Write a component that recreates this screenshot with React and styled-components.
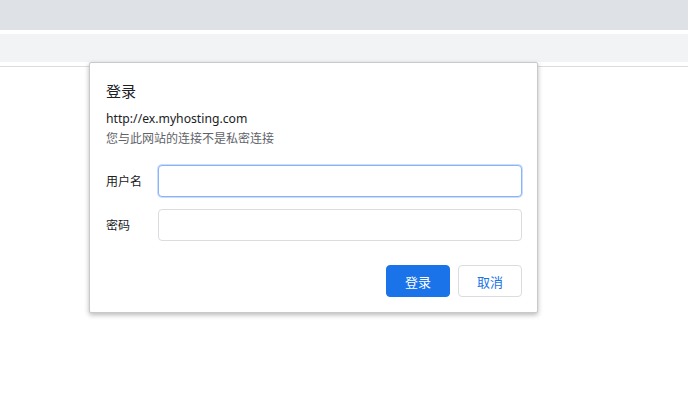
import styled, { createGlobalStyle } from "styled-components"

const GlobalStyle = createGlobalStyle`
  body {
    margin: 0;
    background: #ffffff;
    font-family: "Segoe UI", "Noto Sans", "Noto Sans CJK SC", sans-serif;
  }
`

const blue = "#1a73e8"
const line = "#dadce0"

const Page = () => {
  return (
    <Screen>
      <GlobalStyle />
      <TabStrip />
      <Toolbar />
      <Divider />
      <Dialog>
        <Title>登录</Title>
        <Origin>http://ex.myhosting.com</Origin>
        <Note>您与此网站的连接不是私密连接</Note>
        <Form>
          <Row>
            <Label>用户名</Label>
            <Input type="text" $focused />
          </Row>
          <Row>
            <Label>密码</Label>
            <Input type="password" />
          </Row>
        </Form>
        <Actions>
          <Button $primary>登录</Button>
          <Button>取消</Button>
        </Actions>
      </Dialog>
    </Screen>
  )
}

export default Page

const Screen = styled.div`
  position: relative;
  width: 688px;
  height: 406px;
  background: #ffffff;
  overflow: hidden;
`

const TabStrip = styled.div`
  height: 30px;
  background: #dee1e6;
`

const Toolbar = styled.div`
  height: 28px;
  margin-top: 4px;
  background: #f1f3f4;
`

const Divider = styled.div`
  height: 1px;
  margin-top: 4px;
  background: ${line};
`

const Dialog = styled.div`
  position: absolute;
  top: 62px;
  left: 89px;
  width: 416px;
  padding: 18px 15px 15px 16px;
  background: #ffffff;
  border: 1px solid #c8c9cc;
  border-radius: 2px;
  box-shadow: 0 2px 5px rgba(0, 0, 0, 0.28);
  display: flex;
  flex-direction: column;
`

const Title = styled.div`
  font-size: 15px;
  line-height: 20px;
  color: #202124;
`

const Origin = styled.div`
  margin-top: 9px;
  font-size: 12.2px;
  line-height: 18px;
  color: #202124;
`

const Note = styled.div`
  margin-top: 3px;
  font-size: 12px;
  line-height: 16px;
  color: #5f6368;
`

const Form = styled.div`
  margin-top: 18px;
  display: flex;
  flex-direction: column;
  gap: 12px;
`

const Row = styled.div`
  display: flex;
  align-items: center;
`

const Label = styled.label`
  width: 52px;
  flex: none;
  font-size: 12px;
  color: #202124;
`

const Input = styled.input`
  box-sizing: border-box;
  flex: 1;
  height: 32px;
  margin: 0;
  padding: 0 8px;
  border: 1px solid ${(p) => (p.$focused ? "#8ab4f8" : line)};
  box-shadow: ${(p) => (p.$focused ? "0 0 0 1px rgba(138, 180, 248, 0.45)" : "none")};
  border-radius: 4px;
  outline: none;
  background: #ffffff;
  font-size: 13px;
`

const Actions = styled.div`
  margin-top: 24px;
  display: flex;
  justify-content: flex-end;
  gap: 8px;
`

const Button = styled.button`
  box-sizing: border-box;
  width: 64px;
  height: 32px;
  padding: 0;
  border-radius: 4px;
  border: 1px solid ${(p) => (p.$primary ? blue : line)};
  background: ${(p) => (p.$primary ? blue : "#ffffff")};
  color: ${(p) => (p.$primary ? "#ffffff" : blue)};
  font-family: "Segoe UI", "Noto Sans", "Noto Sans CJK SC", sans-serif;
  font-size: 13px;
  cursor: pointer;
`
